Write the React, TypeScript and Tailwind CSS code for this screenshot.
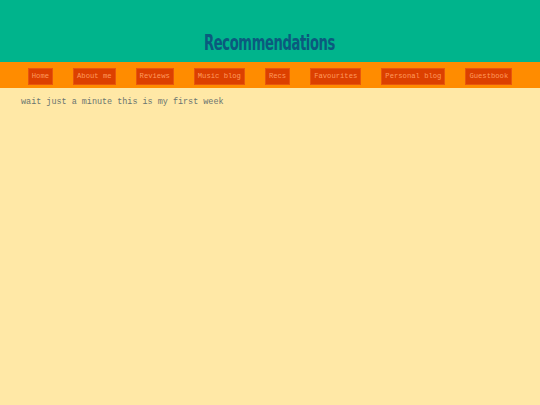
const NAV = ['Home', 'About me', 'Reviews', 'Music blog', 'Recs', 'Favourites', 'Personal blog', 'Guestbook']

export default function App() {
  return (
    <div className="min-h-[405px] bg-[#ffe8a6]">
      {/* header */}
      <div className="h-[62px] bg-[#00b48c] flex justify-center items-end pb-[8px]">
        <h1 className="inline-block text-[#0b5a7e] text-[22px] font-bold leading-none tracking-[-0.6px] [transform:scaleX(0.665)] [font-family:'DejaVu_Sans_Condensed','DejaVu_Sans',sans-serif]">
          Recommendations
        </h1>
      </div>

      {/* nav */}
      <div className="h-[26px] bg-[#ff8c00] flex justify-center items-start pt-[6px] gap-[20px]">
        {NAV.map((item) => (
          <a
            key={item}
            className="h-[16.5px] px-[3px] flex items-center bg-[#dc4000] border border-[#e8560c] text-[#ff9a5c] text-[7.2px] [font-family:'Liberation_Mono',monospace]"
          >
            {item}
          </a>
        ))}
      </div>

      <p className="pl-[21px] pt-[8px] text-[8.45px] text-[#6a7470] [font-family:'Liberation_Mono',monospace]">
        wait just a minute this is my first week
      </p>
    </div>
  )
}
